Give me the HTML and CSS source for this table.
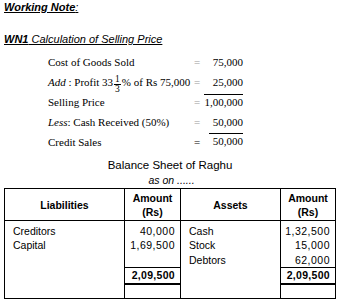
FILE: index.html
```html
<!DOCTYPE html>
<html>
<head>
<meta charset="utf-8">
<link rel="stylesheet" href="styles.css">
</head>
<body>
<div class="page">
  <p class="heading"><b>Working Note</b>:</p>
  <p class="wn"><b>WN1</b> Calculation of Selling Price</p>

  <div class="calc">
    <div class="lbl">Cost of Goods Sold</div><div class="eq light">=</div><div class="amt">75,000</div>
    <div class="lbl"><i>Add</i> : Profit 33<span class="frac"><span class="num">1</span><span class="den">3</span></span>% of Rs 75,000</div><div class="eq light">=</div><div class="amt">25,000</div>
    <div class="lbl">Selling Price</div><div class="eq light">=</div><div class="amt"><span class="over">1,00,000</span></div>
    <div class="lbl"><i>Less</i>: Cash Received (50%)</div><div class="eq light">=</div><div class="amt">50,000</div>
    <div class="lbl">Credit Sales</div><div class="eq">=</div><div class="amt"><span class="ruled">50,000</span></div>
  </div>

  <div class="bs">
    <div class="bs-title">Balance Sheet of Raghu</div>
    <div class="bs-date">as on ......</div>
    <table class="sheet">
      <thead>
        <tr>
          <th class="c1">Liabilities</th>
          <th class="c2">Amount<br>(Rs)</th>
          <th class="c3">Assets</th>
          <th class="c4">Amount<br>(Rs)</th>
        </tr>
      </thead>
      <tbody>
        <tr><td>Creditors</td><td class="n">40,000</td><td>Cash</td><td class="n">1,32,500</td></tr>
        <tr><td>Capital</td><td class="n">1,69,500</td><td>Stock</td><td class="n">15,000</td></tr>
        <tr><td></td><td class="n"></td><td>Debtors</td><td class="n">62,000</td></tr>
        <tr class="total"><td></td><td class="n tot">2,09,500</td><td></td><td class="n tot">2,09,500</td></tr>
        <tr class="blank"><td></td><td></td><td></td><td></td></tr>
      </tbody>
    </table>
  </div>
</div>
</body>
</html>
```
FILE: styles.css
```css
html, body {
  margin: 0;
  padding: 0;
  background: #fff;
}
body {
  font-family: "Liberation Sans", Arial, sans-serif;
  color: #000;
  width: 339px;
  height: 300px;
  overflow: hidden;
}
.page {
  padding: 0 4px;
}
.heading {
  margin: 0;
  padding-top: 1px;
  font-size: 11px;
  line-height: 13px;
  font-style: italic;
  text-decoration: underline;
}
.wn {
  margin: 19px 0 0 0;
  font-size: 11px;
  line-height: 13px;
  font-style: italic;
  text-decoration: underline;
}
.calc {
  margin: 6px 0 0 44px;
  display: grid;
  grid-template-columns: 143px 12px 40px;
  grid-template-rows: 20px 20px 20px 20px 18px;
  font-family: "Liberation Serif", "Times New Roman", serif;
  font-size: 11px;
  line-height: 20px;
  white-space: nowrap;
}
.eq {
  text-align: center;
}
.eq.light {
  color: #999;
}
.amt {
  text-align: right;
}
.over {
  border-top: 1px solid #000;
  padding-top: 1px;
  padding-left: 1px;
}
.ruled {
  display: inline-block;
  border-top: 1px solid #000;
  line-height: 15px;
  padding-left: 4px;
  margin-top: 1px;
  vertical-align: top;
}
.frac {
  display: inline-flex;
  flex-direction: column;
  vertical-align: 4px;
  font-size: 9.5px;
  line-height: 7px;
  margin: 0 1px 0 1px;
  text-align: center;
}
.frac .num {
  border-bottom: 1px solid #000;
  padding: 0 1px 1px;
}
.frac .den {
  padding-top: 1px;
}
.bs {
  margin-top: 8px;
}
.bs-title {
  text-align: center;
  font-size: 11.5px;
  line-height: 14px;
  padding-left: 1px;
}
.bs-date {
  text-align: center;
  font-size: 10.5px;
  line-height: 11px;
  font-style: italic;
  padding-left: 4px;
  margin-top: 3px;
}
.sheet {
  margin-top: 2px;
  border-collapse: collapse;
  width: 332px;
  table-layout: fixed;
  font-size: 10.5px;
  border: 1px solid #000;
}
.sheet th, .sheet td {
  border-left: 1px solid #000;
  border-right: 1px solid #000;
  padding: 0 5px 0 8px;
  line-height: 14px;
  height: 15px;
  box-sizing: border-box;
}
.sheet th {
  font-weight: bold;
  text-align: center;
  border-bottom: 1px solid #000;
  padding: 0;
  height: 32px;
  line-height: 14px;
}
.sheet .c1 { width: 120px; }
.sheet .c2 { width: 56px; }
.sheet .c3 { width: 100px; }
.sheet .c4 { width: 55px; }
.sheet td.n {
  text-align: right;
  letter-spacing: 0.5px;
  padding-right: 5px;
  padding-left: 0;
}
.sheet tbody tr:first-child td {
  height: 17px;
  vertical-align: bottom;
}
.sheet td.tot {
  font-weight: bold;
  border-top: 1px solid #000;
  border-bottom: 2px solid #000;
  letter-spacing: 0.3px;
  height: 16px;
}
.sheet tr.blank td {
  height: 15px;
}
```
